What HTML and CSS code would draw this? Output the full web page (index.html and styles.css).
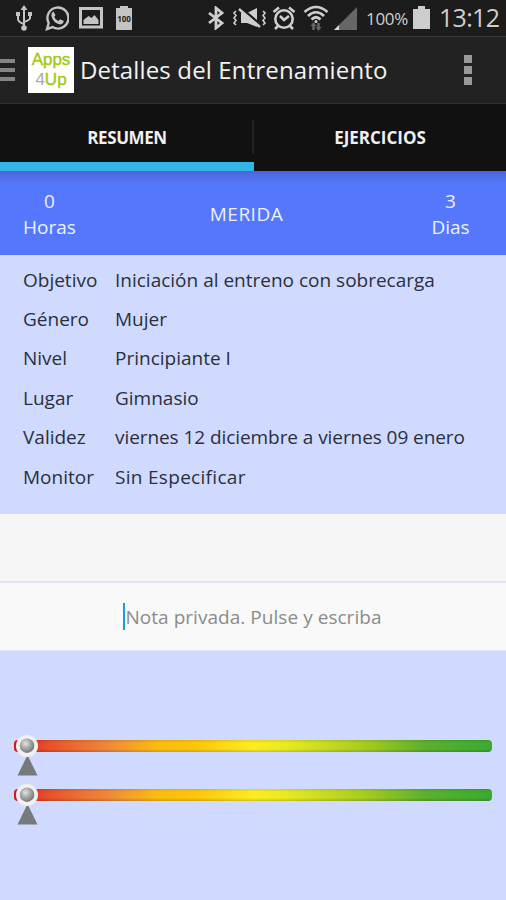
FILE: index.html
```html
<!DOCTYPE html>
<html lang="es">
<head>
    <meta charset="UTF-8">
    <meta name="viewport" content="width=device-width, initial-scale=1.0">
    <title>Detalles del Entrenamiento</title>
    <link rel="stylesheet" href="styles.css">
</head>
<body>
    <!-- Status Bar -->
    <div class="status-bar">
        <div class="status-left">
            <svg width="18" height="26" viewBox="0 0 18 26" fill="none" stroke="#c4c4c4" stroke-width="2">
                <path d="M9 3v19M3 10v4q0 3 6 5M15 9v4q0 2-6 4"/>
                <path d="M9 0l3.500 5h-7zM1 7h4v4H1zM13 7h4v4h-4z" fill="#c4c4c4" stroke="none"/>
                <circle cx="9" cy="23" r="2.800" fill="#c4c4c4" stroke="none"/>
            </svg>
            <svg width="24" height="26" viewBox="0 0 24 26">
                <path d="M2 24l1.700-6A10.500 10.500 0 1 1 7.500 22z" fill="none" stroke="#c4c4c4" stroke-width="2.400"/>
                <path d="M8.500 6.500l2 3.800-1.300 1.700q1.300 2.700 4 4l2-1.800 3.600 1.900q-.4 3-3.400 3.300Q8 18.500 6.300 10.500q0-3 2.200-4z" fill="#c4c4c4"/>
            </svg>
            <svg width="24" height="22" viewBox="0 0 24 22">
                <rect x="1.500" y="1.500" width="21" height="18.500" fill="none" stroke="#c4c4c4" stroke-width="3"/>
                <path d="M4.500 17v-4l5-4 3 2 3-3 4 5v4z" fill="#c4c4c4"/>
            </svg>
            <svg width="18" height="26" viewBox="0 0 18 26">
                <path d="M5 1h8v2h4v22H1V3h4z" fill="#c4c4c4"/>
                <text x="9" y="17" class="battery-text">100</text>
            </svg>
        </div>
        <div class="status-right">
            <svg width="18" height="24" viewBox="0 0 18 24" fill="none" stroke="#cfcfcf" stroke-width="2.800">
                <path d="M2 7l13 10-6 5V2l6 5L2 17"/>
            </svg>
            <svg class="mute" width="33" height="20" viewBox="0 0 33 20">
                <path d="M8 5h6l10-5v19l-10-4H8z" fill="#cfcfcf"/>
                <path d="M8 0l20 17" stroke="#1c1c1c" stroke-width="2.500"/>
                <path d="M6 1l21 18" stroke="#cfcfcf" stroke-width="2.400"/>
                <path d="M3 3l-2 2 2 2.500-2 2.500 2 2.500-2 2.500 2 2M30 3l2 2-2 2.500 2 2.500-2 2.500 2 2.500-2 2" fill="none" stroke="#cfcfcf" stroke-width="1.600"/>
            </svg>
            <svg class="alarm" width="24" height="24" viewBox="0 0 24 24" fill="none" stroke="#cfcfcf" stroke-width="2.600">
                <circle cx="12" cy="13" r="8.700"/>
                <path d="M8 10l4 4 5-4M1.500 6L7 1.500M22.500 6L17 1.500M6 20l-3 3M18 20l3 3"/>
            </svg>
            <svg class="wifi" width="26" height="26" viewBox="0 0 26 26" fill="none" stroke="#cfcfcf" stroke-width="2.600">
                <path d="M1.500 7Q13-3 24.500 7M5 11Q13 3.500 21 11M8.500 14.500Q13 10 17.500 14.500"/>
                <circle cx="13" cy="16.500" r="1.500" fill="#cfcfcf" stroke="none"/>
                <path d="M10.500 25v-6M15.500 18v6" stroke="#666"/>
                <path d="M7.500 21l3-4 3 4zM12.500 22h6l-3 4z" fill="#666" stroke="none"/>
            </svg>
            <svg class="signal" width="23" height="23" viewBox="0 0 23 23">
                <path d="M0 23L23 0v23z" fill="#666"/>
                <path d="M0 23l5-5v5z" fill="#d8d8d8"/>
            </svg>
            <span class="percent">100%</span>
            <svg class="battery" width="17" height="24" viewBox="0 0 17 24">
                <path d="M5 0h7v3h5v20H0V3h5z" fill="#cdcdcd"/>
            </svg>
            <span class="clock">13:12</span>
        </div>
    </div>

    <!-- Action Bar -->
    <div class="action-bar">
        <div class="drawer-icon"><i></i><i></i><i></i></div>
        <div class="logo">
            <span>Apps</span>
            <span><b>4</b>Up</span>
        </div>
        <h1>Detalles del Entrenamiento</h1>
        <div class="overflow-icon"><i></i><i></i><i></i></div>
    </div>

    <!-- Tabs -->
    <div class="tabs">
        <div class="tab active">RESUMEN</div>
        <div class="tab">EJERCICIOS</div>
    </div>

    <!-- Summary -->
    <div class="summary">
        <div class="side">0<br>Horas</div>
        <div class="place">MERIDA</div>
        <div class="side">3<br>Dias</div>
    </div>

    <!-- Details -->
    <div class="details">
        <span>Objetivo</span><span>Iniciación al entreno con sobrecarga</span>
        <span>Género</span><span>Mujer</span>
        <span>Nivel</span><span>Principiante I</span>
        <span>Lugar</span><span>Gimnasio</span>
        <span>Validez</span><span class="dates">viernes 12 diciembre a viernes 09 enero</span>
        <span>Monitor</span><span class="trainer">Sin Especificar</span>
    </div>

    <!-- Notes -->
    <div class="note"></div>
    <div class="note private"><i class="caret"></i><span>Nota privada. Pulse y escriba</span></div>

    <!-- Sliders -->
    <div class="sliders">
        <div class="slider">
            <div class="track"></div>
            <svg class="thumb" width="24" height="42" viewBox="0 0 24 42">
                <use href="#thumb"/>
            </svg>
        </div>
        <div class="slider">
            <div class="track"></div>
            <svg class="thumb" width="24" height="42" viewBox="0 0 24 42">
                <defs>
                    <radialGradient id="ball" cx="40%" cy="35%" r="65%">
                        <stop offset="0" stop-color="#e4e4e4"/>
                        <stop offset=".5" stop-color="#a9a9a9"/>
                        <stop offset="1" stop-color="#777"/>
                    </radialGradient>
                    <g id="thumb">
                        <path d="M12.500 20l10 20.500h-20z" fill="#767a7a"/>
                        <circle cx="12" cy="11" r="11" fill="#f1f1ef"/>
                        <circle cx="12" cy="10.700" r="7.300" fill="url(#ball)"/>
                    </g>
                </defs>
                <use href="#thumb"/>
            </svg>
        </div>
    </div>
</body>
</html>
```
FILE: styles.css
```css
* {
    margin: 0;
    padding: 0;
    box-sizing: border-box;
}

body {
    width: 506px;
    height: 900px;
    overflow: hidden;
    background: #d0daff;
    font-family: "Open Sans", "Noto Sans", sans-serif;
    font-size: 19px;
    color: #2b2f3c;
    white-space: nowrap;
}

svg {
    display: block;
    flex: none;
}

/* Status Bar */
.status-bar {
    display: flex;
    justify-content: space-between;
    height: 37px;
    padding: 0 7px 0 15px;
    background: #1c1c1c;
    border-bottom: 1px solid #393939;
    color: #cfcfcf;
}

.status-left,
.status-right {
    display: flex;
    align-items: center;
}

.status-left {
    gap: 12px;
}

.status-left svg:nth-child(3) {
    margin-left: -2px;
}

.battery-text {
    font-size: 8px;
    font-weight: bold;
    text-anchor: middle;
    fill: #222;
}

.mute {
    margin-left: 8px;
}

.alarm {
    margin-left: 6px;
}

.wifi {
    margin-left: 7px;
}

.signal {
    margin-left: 5px;
}

.percent {
    width: 42px;
    margin-left: 9px;
    font-size: 17px;
    letter-spacing: -0.3px;
}

.battery {
    margin-left: 5px;
}

.clock {
    width: 60px;
    margin-left: 9px;
    padding-bottom: 2px;
    font-size: 25px;
    line-height: 34px;
    letter-spacing: -0.7px;
}

/* Action Bar */
.action-bar {
    display: flex;
    align-items: center;
    height: 67px;
    background: #222;
    border-bottom: 1px solid #2e2e2e;
}

.drawer-icon {
    display: grid;
    gap: 5px;
    width: 15px;
}

.drawer-icon i {
    height: 4px;
    background: #858585;
}

.logo {
    width: 46px;
    height: 46px;
    margin-left: 13px;
    padding-top: 3px;
    background: #fff;
    color: #a5c814;
    font-family: "Liberation Sans", sans-serif;
    font-size: 17px;
    line-height: 20px;
    text-align: center;
    -webkit-text-stroke: 0.4px #a5c814;
}

.logo span {
    display: block;
}

.logo b {
    color: #aaa;
    font-weight: normal;
    -webkit-text-stroke: 0;
}

h1 {
    margin-left: 6px;
    padding-bottom: 1px;
    color: #f2f2f2;
    font-size: 24px;
    font-weight: normal;
    letter-spacing: 0.14px;
}

.overflow-icon {
    display: grid;
    gap: 3px;
    width: 8px;
    margin-left: auto;
    margin-right: 34px;
}

.overflow-icon i {
    height: 8px;
    background: #999;
}

/* Tabs */
.tabs {
    display: flex;
    height: 67px;
    background: #111;
}

.tab {
    display: flex;
    flex: 1;
    align-items: center;
    justify-content: center;
    border-bottom: 1px solid #111;
    color: #f0f0f0;
    font-size: 17px;
    font-weight: bold;
}

.tab.active {
    flex: 0 0 254px;
    padding-top: 8px;
    border-bottom: 9px solid #33b5e5;
    background: linear-gradient(#222, #222) right 16px / 2px 34px no-repeat;
    letter-spacing: -0.4px;
}

/* Summary */
.summary {
    display: flex;
    align-items: center;
    height: 84px;
    padding: 1px 6px 0 0;
    background: linear-gradient(#4a66d9, #5577fc 12px);
    color: #eef1ff;
    line-height: 26px;
    text-align: center;
}

.side {
    width: 99px;
}

.place {
    flex: 1;
    padding-right: 7px;
    letter-spacing: 0.5px;
}

/* Details */
.details {
    display: grid;
    grid-template-columns: 92px 1fr;
    grid-auto-rows: 39.4px;
    align-items: center;
    height: 259px;
    padding: 5px 0 0 23px;
}

.dates {
    letter-spacing: -0.07px;
}

.trainer {
    letter-spacing: 0.3px;
}

/* Notes */
.note {
    display: flex;
    align-items: center;
    justify-content: center;
    height: 69px;
    background: #f6f6f6;
    border-bottom: 2px solid #e0e4f8;
}

.private {
    height: 68px;
    padding-right: 1px;
    background: #f9f9f9;
    border-bottom: 1px solid #e0e4f8;
    color: #8b8b8b;
    letter-spacing: 0.04px;
}

.caret {
    width: 2px;
    height: 27px;
    background: #1b9cdd;
}

/* Sliders */
.sliders {
    padding: 89px 14px 0 14px;
}

.slider {
    position: relative;
    height: 49px;
}

.track {
    height: 12px;
    border-radius: 4px;
    background: linear-gradient(rgba(0, 0, 0, 0.1), transparent 25%, transparent 75%, rgba(0, 0, 0, 0.18)),
        linear-gradient(90deg, #d8141c, #e8502a 7%, #f08a38 20%, #fcbc10 30%, #fec60a 38%, #fdec20 50%, #e8ea22 57%, #a8cc20 73%, #5cb02c 86%, #38ab30);
}

.thumb {
    position: absolute;
    left: 1px;
    top: -5px;
}
```
